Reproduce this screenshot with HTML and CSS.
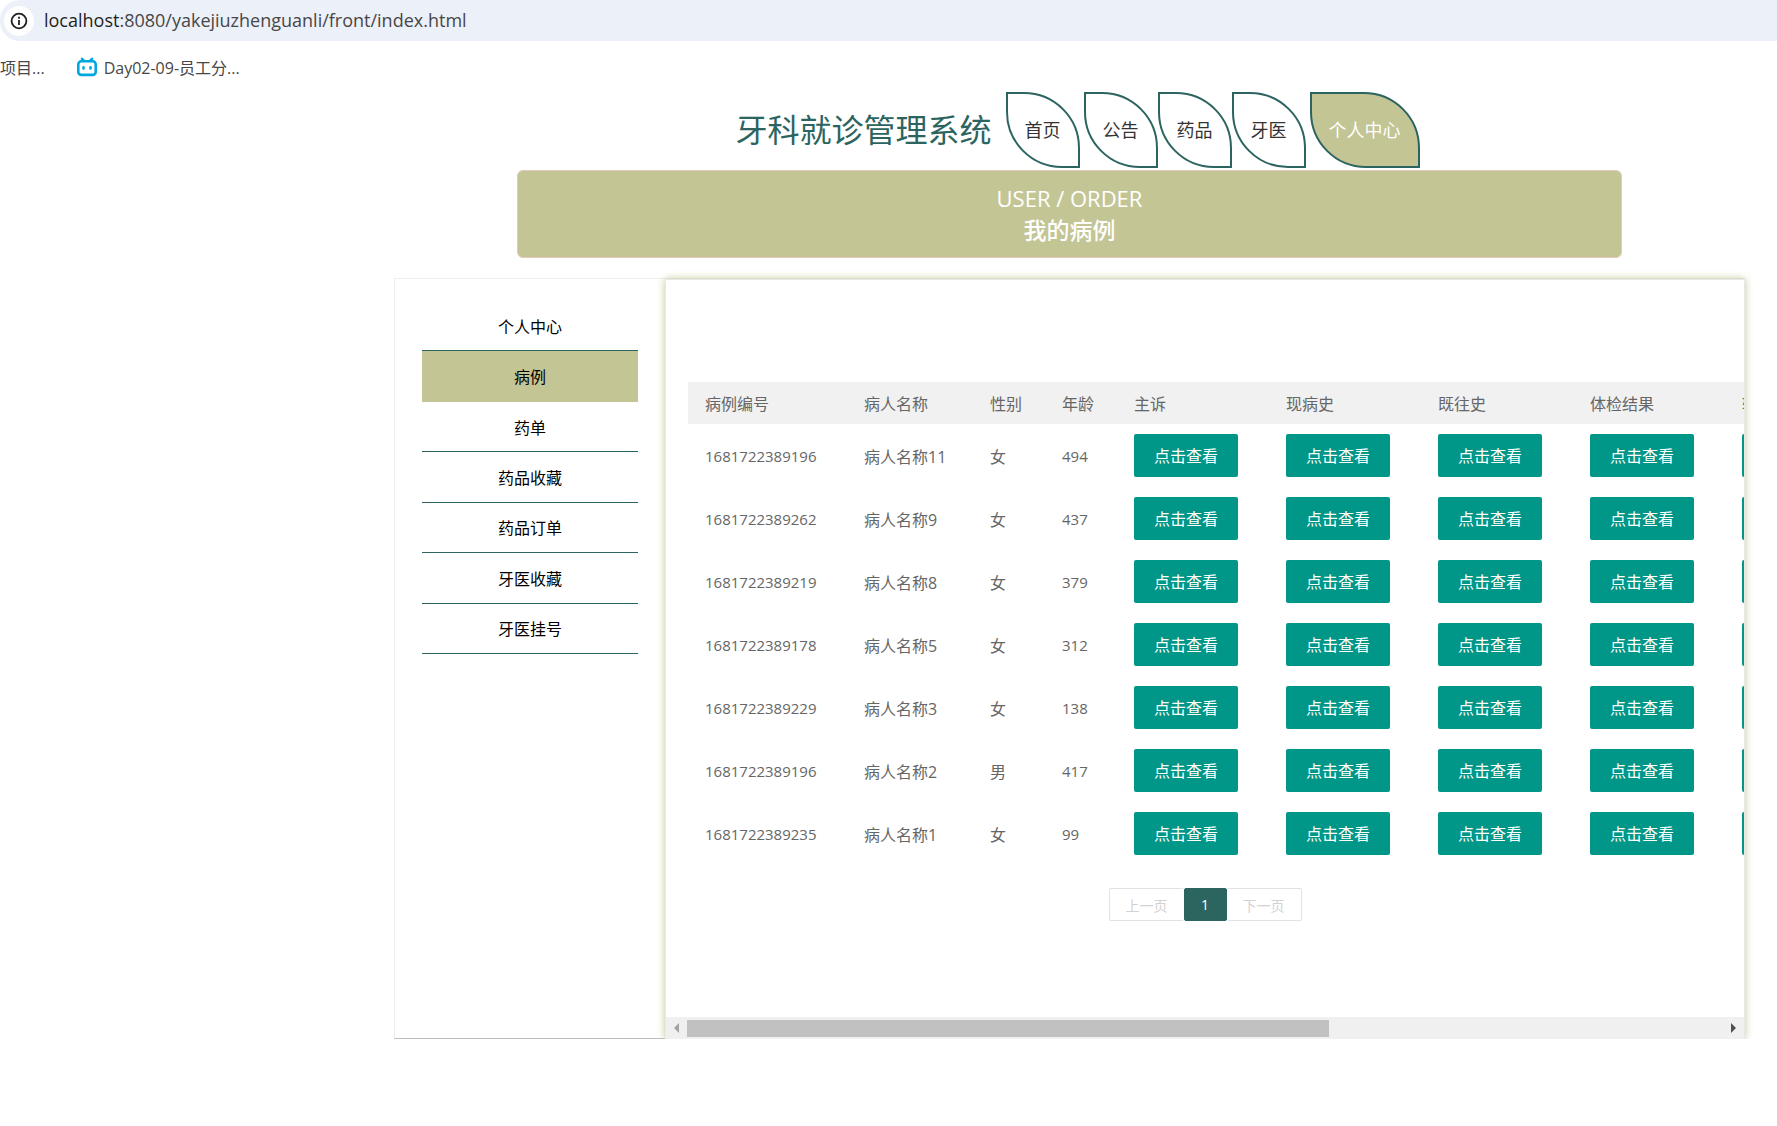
FILE: index.html
```
<!DOCTYPE html>
<html lang="zh-CN">

<head>
  <meta charset="UTF-8">
  <meta name="viewport" content="width=device-width, initial-scale=1.0">
  <title>我的病例</title>
  <link rel="stylesheet" href="styles.css">
</head>

<body>
  <div class="address">
    <span class="info">
      <svg width="18" height="18" viewBox="0 0 18 18" fill="none" stroke="#1f1f1f" stroke-width="1.8">
        <circle cx="9" cy="9" r="7.4"/>
        <path d="M9 8v5M9 4.8v1.9"/>
      </svg>
    </span>
    <span class="url"><b>localhost</b>:8080/yakejiuzhenguanli/front/index.html</span>
  </div>
  <div class="bookmarks">
    <a href="#">项目...</a>
    <a href="#">
      <svg width="20" height="20" viewBox="0 0 20 20" fill="none" stroke="#00a8e0" stroke-width="2.6" stroke-linecap="round">
        <rect x="1.3" y="4.3" width="17.4" height="13.6" rx="3"/>
        <path d="M5 1.8l2 2M15 1.8l-2 2M6.5 10.4v1M13.5 10.4v1"/>
      </svg>
      Day02-09-员工分...
    </a>
  </div>

  <div class="page">
    <div class="header">
      <h1>牙科就诊管理系统</h1>
      <ul class="nav">
        <li class="wide"><a href="#">首页</a></li>
        <li><a href="#">公告</a></li>
        <li><a href="#">药品</a></li>
        <li class="wide"><a href="#">牙医</a></li>
        <li><a href="#" class="active">个人中心</a></li>
      </ul>
    </div>

    <div class="banner">
      <p>USER / ORDER</p>
      <h2>我的病例</h2>
    </div>

    <div class="center">
      <ul class="side">
        <li><a href="#">个人中心</a></li>
        <li class="active"><a href="#">病例</a></li>
        <li><a href="#">药单</a></li>
        <li><a href="#">药品收藏</a></li>
        <li><a href="#">药品订单</a></li>
        <li><a href="#">牙医收藏</a></li>
        <li><a href="#">牙医挂号</a></li>
      </ul>

      <div class="panel">
        <div class="table-box">
          <table>
            <colgroup>
              <col class="c-no"><col class="c-name"><col class="c-small"><col class="c-small">
              <col class="c-btn"><col class="c-btn"><col class="c-btn"><col class="c-btn"><col class="c-btn">
            </colgroup>
            <thead>
              <tr><th>病例编号</th><th>病人名称</th><th>性别</th><th>年龄</th><th>主诉</th><th>现病史</th><th>既往史</th><th>体检结果</th><th>辅助检查</th></tr>
            </thead>
            <tbody>
              <tr>
                <td class="num">1681722389196</td><td>病人名称11</td><td>女</td><td class="num">494</td>
                <td><button>点击查看</button></td><td><button>点击查看</button></td><td><button>点击查看</button></td><td><button>点击查看</button></td><td><button>点击查看</button></td>
              </tr>
              <tr>
                <td class="num">1681722389262</td><td>病人名称9</td><td>女</td><td class="num">437</td>
                <td><button>点击查看</button></td><td><button>点击查看</button></td><td><button>点击查看</button></td><td><button>点击查看</button></td><td><button>点击查看</button></td>
              </tr>
              <tr>
                <td class="num">1681722389219</td><td>病人名称8</td><td>女</td><td class="num">379</td>
                <td><button>点击查看</button></td><td><button>点击查看</button></td><td><button>点击查看</button></td><td><button>点击查看</button></td><td><button>点击查看</button></td>
              </tr>
              <tr>
                <td class="num">1681722389178</td><td>病人名称5</td><td>女</td><td class="num">312</td>
                <td><button>点击查看</button></td><td><button>点击查看</button></td><td><button>点击查看</button></td><td><button>点击查看</button></td><td><button>点击查看</button></td>
              </tr>
              <tr>
                <td class="num">1681722389229</td><td>病人名称3</td><td>女</td><td class="num">138</td>
                <td><button>点击查看</button></td><td><button>点击查看</button></td><td><button>点击查看</button></td><td><button>点击查看</button></td><td><button>点击查看</button></td>
              </tr>
              <tr>
                <td class="num">1681722389196</td><td>病人名称2</td><td>男</td><td class="num">417</td>
                <td><button>点击查看</button></td><td><button>点击查看</button></td><td><button>点击查看</button></td><td><button>点击查看</button></td><td><button>点击查看</button></td>
              </tr>
              <tr>
                <td class="num">1681722389235</td><td>病人名称1</td><td>女</td><td class="num">99</td>
                <td><button>点击查看</button></td><td><button>点击查看</button></td><td><button>点击查看</button></td><td><button>点击查看</button></td><td><button>点击查看</button></td>
              </tr>
            </tbody>
          </table>
        </div>

        <div class="pager">
          <button disabled>上一页</button>
          <button class="current">1</button>
          <button disabled>下一页</button>
        </div>

        <div class="scrollbar">
          <svg width="5" height="10" viewBox="0 0 5 10"><path d="M5 0v10L0 5z" fill="#a3a3a3"/></svg>
          <div class="track"><div class="thumb"></div></div>
          <svg width="5" height="10" viewBox="0 0 5 10"><path d="M0 0v10l5-5z" fill="#505050"/></svg>
        </div>
      </div>
    </div>
  </div>
</body>

</html>
```
FILE: styles.css
```
*{
  box-sizing: border-box;
  margin:0;
  padding:0;
}
body{
  font-family: "Open Sans","Noto Sans CJK SC",sans-serif;
  font-size:16px;
  background-color:#fff;
}
a{
  color:inherit;
  text-decoration: none;
}
ul{
  list-style-type:none;
}
button{
  font-family: inherit;
  border:0;
  cursor: pointer;
}

/* 地址栏 */
.address{
  display: flex;
  align-items: center;
  gap:10px;
  height:41px;
  padding-left:4px;
  background-color:#ecf0f9;
  border-radius: 20px 0 0 20px;
}
.info{
  display: flex;
  align-items: center;
  justify-content: center;
  width:30px;
  height:30px;
  border-radius: 50%;
  background-color:#fff;
}
.url{
  padding-bottom:2px;
  font-size:18px;
  color:#474747;
}
.url b{
  font-weight: normal;
  color:#1f1f1f;
}
.bookmarks{
  display: flex;
  gap:32px;
  height:51px;
  font-size:16px;
  color:#474747;
}
.bookmarks a{
  display: flex;
  align-items: center;
  gap:7px;
}

.page{
  padding-left:362px;
}
.header{
  display: flex;
  align-items: center;
  justify-content: center;
  gap:14px;
  height:76px;
  padding-left:16px;
}
.header h1{
  font-size:32px;
  font-weight: normal;
  line-height:40px;
  color:#2c6460;
}
.nav{
  display: flex;
}
.nav .wide{
  margin-right:4px;
}
.nav a{
  display: block;
  padding:0 17px;
  line-height:72px;
  font-size:18px;
  color:#333;
  border:2px solid #2c6460;
  border-radius: 0 56px;
}
.nav .active{
  color:#fff;
  background-color:#c3c594;
}

.banner{
  margin:2px 155px 20px;
  padding:11px 0;
  text-align: center;
  line-height:32px;
  color:#fff;
  background-color:#c3c594;
  border:1px solid #e6c9ba;
  border-radius: 6px;
}
.banner p{
  font-size:22px;
}
.banner h2{
  font-size:23px;
  font-weight: 500;
}

.center{
  display: flex;
  margin:0 32px;
  min-height:761px;
  border-left:1px solid #eee;
  border-top:1px solid #eee;
  border-bottom:1px solid #bbb;
}
.side{
  display: grid;
  grid-auto-rows: 1fr;
  flex:none;
  width:270px;
  height:375px;
  padding:22px 27px 0;
}
.side li{
  display: flex;
  align-items: center;
  justify-content: center;
  color:#000;
  border-bottom:1px solid #2c6460;
}
.side .active{
  background-color:#c3c594;
  border-color:#c3c594;
}

.panel{
  display: flex;
  flex-direction: column;
  flex:1;
  min-width:0;
  margin-bottom:-1px;
  padding-top:102px;
  background-color:#fff;
  border:1px solid #e8e8e8;
  border-bottom:0;
  box-shadow: 0 0 8px #c3c594;
}
.table-box{
  margin-left:22px;
  overflow: hidden;
}
table{
  width:1189px;
  table-layout: fixed;
  border-collapse: collapse;
  color:#666;
}
.c-no{
  width:159px;
}
.c-name{
  width:126px;
}
.c-small{
  width:72px;
}
.c-btn{
  width:152px;
}
th,td{
  padding:0 0 0 17px;
  text-align: left;
  font-weight: normal;
  white-space: nowrap;
}
th{
  height:42px;
  background-color:#f1f1f1;
}
td{
  height:63px;
}
.num{
  font-size:15px;
}
td button{
  display: block;
  width:104px;
  height:43px;
  padding-bottom:2px;
  font-size:16px;
  color:#fff;
  background-color:#009688;
  border-radius: 2px;
}

.pager{
  display: flex;
  justify-content: center;
  margin-top:23px;
}
.pager button{
  height:33px;
  padding:0 16px;
  font-size:14px;
  color:#d2d2d2;
  background-color:#fff;
  border:1px solid #e2e2e2;
  border-radius: 2px;
}
.pager button:first-child{
  border-right:0;
}
.pager button:last-child{
  border-left:0;
}
.pager .current{
  width:43px;
  color:#fff;
  background-color:#2c6460;
  border-color:#2c6460;
}

/* 横向滚动条 */
.scrollbar{
  display: flex;
  align-items: center;
  gap:8px;
  height:22px;
  margin-top:auto;
  padding:0 8px;
  background-color:#f0f0f0;
}
.track{
  flex:1;
}
.thumb{
  width:62%;
  height:17px;
  background-color:#c1c1c1;
}
```
